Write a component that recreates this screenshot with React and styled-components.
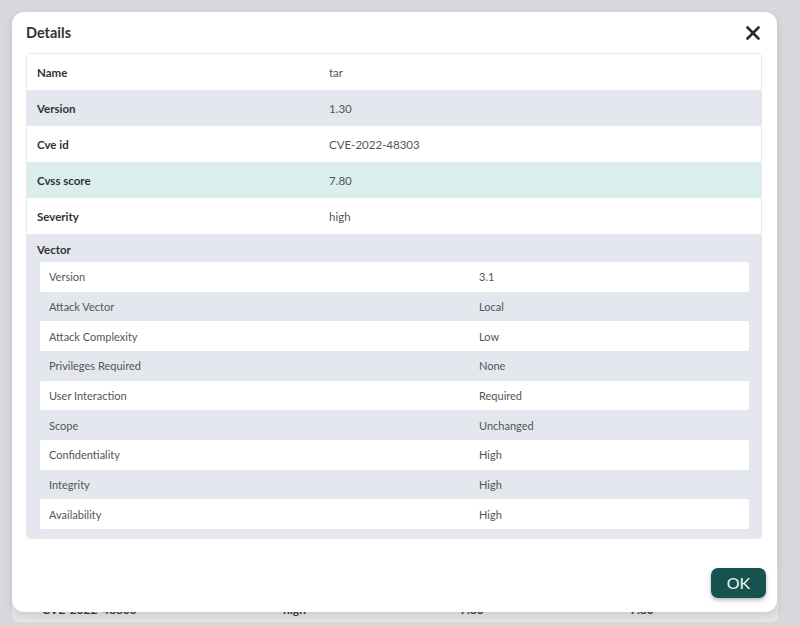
import React from "react";
import styled, { createGlobalStyle } from "styled-components";

const GlobalStyle = createGlobalStyle`
  body {
    margin: 0;
    font-family: Lato, "Open Sans", "Liberation Sans", sans-serif;
  }
  * {
    box-sizing: border-box;
  }
`;

const Page = styled.div`
  position: relative;
  width: 800px;
  height: 626px;
  overflow: hidden;
  background-color: #f0f1f5;
  display: flex;
  flex-direction: column;
  justify-content: flex-end;
  padding: 0 22px 4px 12px;
`;

const BgCard = styled.div`
  background-color: white;
  height: 60px;
  border-radius: 0 0 6px 6px;
  display: flex;
  align-items: flex-end;
  padding-bottom: 5px;
`;

const BgRow = styled.div`
  display: grid;
  grid-template-columns: 30px 241px 177px 170px 1fr;
  width: 100%;
  font-size: 12px;
  font-weight: 700;
  color: #444;
`;

const Overlay = styled.div`
  position: absolute;
  inset: 0;
  background-color: rgba(0, 0, 0, 0.1);
`;

const Modal = styled.div`
  position: absolute;
  top: 12px;
  left: 12px;
  width: 765px;
  height: 600px;
  background-color: white;
  border-radius: 12px;
  box-shadow: 0 3px 8px rgba(0, 0, 0, 0.12);
  display: flex;
  flex-direction: column;
`;

const Header = styled.div`
  height: 41px;
  display: flex;
  align-items: center;
  justify-content: space-between;
  padding: 0 17px 0 14px;
`;

const Title = styled.h2`
  margin: 0;
  font-size: 14.5px;
  font-weight: 700;
  color: #333;
`;

const CloseButton = styled.button`
  border: none;
  background: none;
  padding: 0;
  width: 14px;
  height: 14px;
  display: flex;
  color: #2b2b2b;
  cursor: pointer;
`;

const Body = styled.div`
  padding: 0 15px 0 14px;
`;

const Table = styled.div`
  border: 1px solid #e7e9ed;
  border-radius: 4px;
  overflow: hidden;
`;

const Row = styled.div`
  display: grid;
  grid-template-columns: 292px 1fr;
  align-items: center;
  height: 36px;
  padding: 0 10px;
  background-color: ${(p) => p.$bg || "white"};
  font-size: 11.5px;
`;

const Label = styled.span`
  font-weight: 700;
  color: #333;
`;

const Value = styled.span`
  color: #555;
`;

const VectorSection = styled.div`
  background-color: #e4e7ee;
  padding-bottom: 9px;
`;

const VectorTitle = styled.div`
  height: 28px;
  display: flex;
  align-items: center;
  padding: 3px 10px 0;
  font-size: 11.5px;
  font-weight: 700;
  color: #333;
`;

const VectorList = styled.div`
  margin: 0 12px 0 13px;
`;

const VectorRow = styled.div`
  display: grid;
  grid-template-columns: 430px 1fr;
  align-items: center;
  height: 29.67px;
  padding: 0 9px;
  border-radius: 2px;
  background-color: ${(p) => (p.$striped ? "white" : "transparent")};
  font-size: 11px;
  color: #555;
`;

const Footer = styled.div`
  display: flex;
  justify-content: flex-end;
  padding: 29px 11px 0 0;
`;

const OkButton = styled.button`
  width: 55px;
  height: 30px;
  border: none;
  border-radius: 7px;
  background-color: #17534e;
  color: #eef5f4;
  font-family: Lato, "Open Sans", sans-serif;
  font-size: 16px;
  box-shadow: 0 2px 4px rgba(0, 0, 0, 0.3);
  cursor: pointer;
`;

const details = [
  { label: "Name", value: "tar" },
  { label: "Version", value: "1.30", bg: "#e4e7ee" },
  { label: "Cve id", value: "CVE-2022-48303" },
  { label: "Cvss score", value: "7.80", bg: "#daeeed" },
  { label: "Severity", value: "high" },
];

const vector = [
  ["Version", "3.1"],
  ["Attack Vector", "Local"],
  ["Attack Complexity", "Low"],
  ["Privileges Required", "None"],
  ["User Interaction", "Required"],
  ["Scope", "Unchanged"],
  ["Confidentiality", "High"],
  ["Integrity", "High"],
  ["Availability", "High"],
];

const CloseIcon = () => (
  <svg width="14" height="14" viewBox="0 0 14 14">
    <path
      d="M1.5 1.5 12.5 12.5 M12.5 1.5 1.5 12.5"
      stroke="currentColor"
      strokeWidth="2.6"
      strokeLinecap="round"
    />
  </svg>
);

export default function App() {
  return (
    <Page>
      <GlobalStyle />
      <BgCard>
        <BgRow>
          <span />
          <span>CVE-2022-48303</span>
          <span>high</span>
          <span>7.80</span>
          <span>7.80</span>
        </BgRow>
      </BgCard>
      <Overlay />
      <Modal>
        <Header>
          <Title>Details</Title>
          <CloseButton aria-label="Close">
            <CloseIcon />
          </CloseButton>
        </Header>
        <Body>
          <Table>
            {details.map((d) => (
              <Row key={d.label} $bg={d.bg}>
                <Label>{d.label}</Label>
                <Value>{d.value}</Value>
              </Row>
            ))}
            <VectorSection>
              <VectorTitle>Vector</VectorTitle>
              <VectorList>
                {vector.map(([k, v], i) => (
                  <VectorRow key={k} $striped={i % 2 === 0}>
                    <span>{k}</span>
                    <span>{v}</span>
                  </VectorRow>
                ))}
              </VectorList>
            </VectorSection>
          </Table>
        </Body>
        <Footer>
          <OkButton>OK</OkButton>
        </Footer>
      </Modal>
    </Page>
  );
}
